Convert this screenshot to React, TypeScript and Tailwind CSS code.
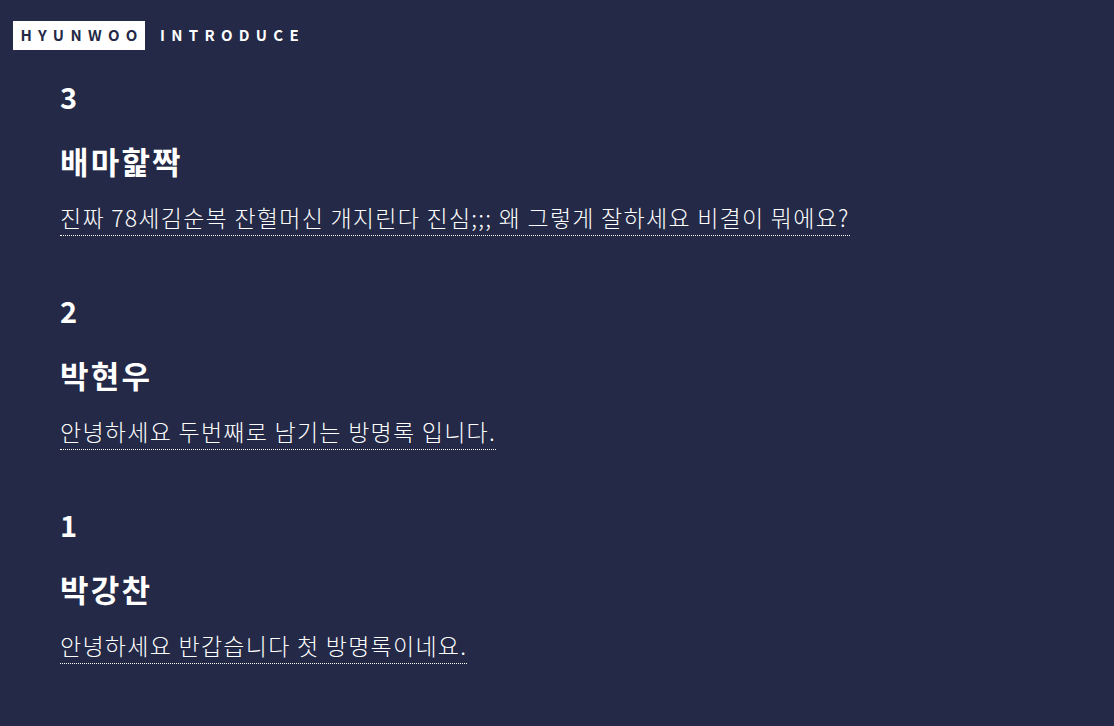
import React from "react";

interface Entry {
  id: number;
  name: string;
  message: string;
}

const entries: Entry[] = [
  { id: 3, name: "배마핥짝", message: "진짜 78세김순복 잔혈머신 개지린다 진심;;; 왜 그렇게 잘하세요 비결이 뭐에요?" },
  { id: 2, name: "박현우", message: "안녕하세요 두번째로 남기는 방명록 입니다." },
  { id: 1, name: "박강찬", message: "안녕하세요 반갑습니다 첫 방명록이네요." },
];

const App: React.FC = () => {
  return (
    <div
      className="min-h-[726px] w-full bg-[#232946] text-white"
      style={{ fontFamily: '"Noto Sans CJK KR", "Noto Sans", sans-serif' }}
    >
      <header className="flex items-center gap-[15px] pl-[13px] pt-[21px]">
        <div className="flex h-[29px] w-[132px] items-center justify-center bg-white pl-[6px] text-[15px] font-bold tracking-[0.42em] text-[#232946]">
          HYUNWOO
        </div>
        <span className="text-[15px] font-bold tracking-[0.42em] text-white">
          INTRODUCE
        </span>
      </header>

      <main className="pl-[60px] pt-[28px]">
        {entries.map((entry) => (
          <section key={entry.id} className="mb-[56px]">
            <div className="text-[29px] font-bold leading-[36px]">{entry.id}</div>
            <h2 className="mt-[25px] text-[31px] font-bold leading-[44px] tracking-[0.07em]">
              {entry.name}
            </h2>
            <p className="mt-[16px] inline-block border-b border-dotted border-white text-[23px] font-light leading-[36px] tracking-[0.055em]">
              {entry.message}
            </p>
          </section>
        ))}
      </main>
    </div>
  );
};

export default App;
